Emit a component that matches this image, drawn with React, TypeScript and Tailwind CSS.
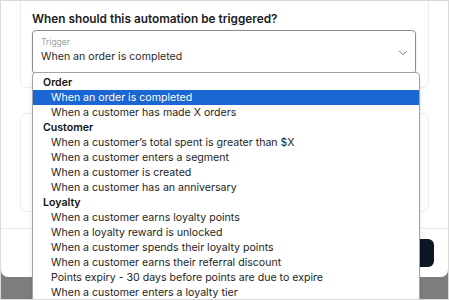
import { ChevronDown } from "lucide-react";

const groups: { label: string; items: string[] }[] = [
  { label: "Order", items: ["When an order is completed", "When a customer has made X orders"] },
  {
    label: "Customer",
    items: [
      "When a customer’s total spent is greater than $X",
      "When a customer enters a segment",
      "When a customer is created",
      "When a customer has an anniversary",
    ],
  },
  {
    label: "Loyalty",
    items: [
      "When a customer earns loyalty points",
      "When a loyalty reward is unlocked",
      "When a customer spends their loyalty points",
      "When a customer earns their referral discount",
      "Points expiry - 30 days before points are due to expire",
      "When a customer enters a loyalty tier",
    ],
  },
];

const selected = "When an order is completed";

export default function App() {
  return (
    <div
      className="relative w-[449px] h-[300px] overflow-hidden bg-[#7d7d7d] border border-[#dadada]"
      style={{ fontFamily: "Inter, 'Noto Sans', sans-serif" }}
    >
      {/* Modal */}
      <div className="h-[276px] bg-white rounded-b-[7px] flex flex-col">
        <div className="flex-1 flex flex-col gap-[25px] px-[19px]">
          {/* Trigger card */}
          <div className="-mt-[10px] h-[97px] border border-[#ececec] rounded-[7px] pl-[11px] pr-[12px] pt-[17px]">
            <p className="text-[11.8px] font-semibold text-[#1c1c1c] leading-[20px]">
              When should this automation be triggered?
            </p>
            <div className="mt-[1px] h-[44px] border border-[#8c8c8c] rounded-[4px] shadow-sm flex items-center justify-between pl-[8px] pr-[5px]">
              <div className="flex flex-col -mt-[2px]">
                <span className="text-[8.5px] text-[#a0a0a0] leading-[12px]">Trigger</span>
                <span className="text-[10.6px] text-[#2a2a2a] leading-[18px]">{selected}</span>
              </div>
              <ChevronDown size={14} strokeWidth={1.4} className="text-[#555] mt-[2px]" />
            </div>
          </div>

          {/* Second card */}
          <div className="h-[99px] border border-[#ececec] rounded-[7px]" />
        </div>

        {/* Footer */}
        <div className="h-[49px] border-t border-[#ebebeb] flex items-center justify-end pr-[14px]">
          <button className="h-[28px] px-[14px] rounded-[6px] bg-[#0d1526] text-white text-[11px] font-medium">
            Save changes
          </button>
        </div>
      </div>

      {/* Native-style dropdown list */}
      <div className="absolute left-[31px] top-[71px] w-[388px] h-[240px] bg-white border border-[#a3a3a3] rounded-t-[4px] pt-[2px] shadow-md">
        {groups.map((g) => (
          <div key={g.label}>
            <div className="h-[15px] leading-[15px] pl-[10px] text-[10.6px] font-semibold text-[#111]">
              {g.label}
            </div>
            {g.items.map((it) => (
              <div
                key={it}
                className={
                  it === selected
                    ? "h-[15px] leading-[15px] pl-[18px] text-[10.6px] text-white bg-[#1a66d2]"
                    : "h-[15px] leading-[15px] pl-[18px] text-[10.6px] text-[#1e1e1e]"
                }
              >
                {it}
              </div>
            ))}
          </div>
        ))}
      </div>
    </div>
  );
}
